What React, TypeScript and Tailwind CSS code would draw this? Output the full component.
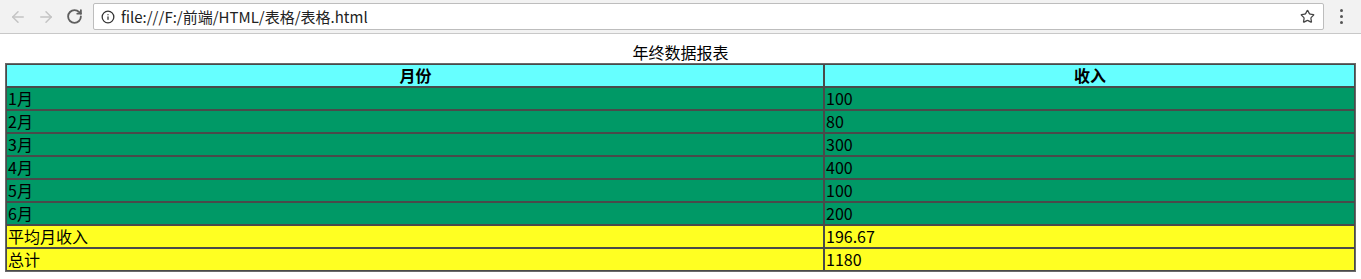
import { ArrowLeft, ArrowRight, RotateCw, Info, Star } from "lucide-react";

const rows = [
  { month: "1月", income: "100" },
  { month: "2月", income: "80" },
  { month: "3月", income: "300" },
  { month: "4月", income: "400" },
  { month: "5月", income: "100" },
  { month: "6月", income: "200" },
];

const font = { fontFamily: '"Noto Sans CJK SC", "Noto Sans", sans-serif' };

function BrowserBar() {
  return (
    <div className="h-[34px] bg-[#f2f2f2] border-b border-[#c8c8c8] flex items-center">
      <div className="flex items-center gap-[10px] pl-[9px] text-[#c4c4c4]">
        <ArrowLeft size={18} strokeWidth={2} />
        <ArrowRight size={18} strokeWidth={2} />
        <RotateCw size={17} strokeWidth={2.6} className="text-[#5f5f5f] ml-[1px]" />
      </div>
      <div className="ml-[10px] h-[27px] w-[1231px] bg-white border border-[#bdbdbd] rounded-[2px] flex items-center pl-[7px] pr-[8px]">
        <Info size={14} strokeWidth={2.2} className="text-[#333]" />
        <span className="ml-[6px] text-[15px] text-[#222] leading-none" style={font}>
          file:///F:/前端/HTML/表格/表格.html
        </span>
        <Star size={15} strokeWidth={2} className="ml-auto text-[#444]" />
      </div>
      <div className="ml-[16px] flex flex-col gap-[3px]">
        <span className="w-[3px] h-[3px] bg-[#555] rounded-full" />
        <span className="w-[3px] h-[3px] bg-[#555] rounded-full" />
        <span className="w-[3px] h-[3px] bg-[#555] rounded-full" />
      </div>
    </div>
  );
}

export default function App() {
  const border = "border border-[#4a4a4a] p-0 pl-[1px] leading-[21px]";
  const cell = border + " text-left";
  return (
    <div className="bg-white h-[279px] text-black text-[16px]" style={font}>
      <BrowserBar />
      <div className="pt-[8px] px-[5px]">
        <table className="w-[1351px] border-separate border-spacing-0 border border-[#6a6a6a]">
          <caption className="leading-[21px]">年终数据报表</caption>
          <thead>
            <tr className="bg-[#66ffff]">
              <th className={"w-[818px] font-bold text-center " + border}>月份</th>
              <th className={"font-bold text-center " + border}>收入</th>
            </tr>
          </thead>
          <tbody>
            {rows.map((r) => (
              <tr key={r.month} className="bg-[#009966]">
                <td className={cell}>{r.month}</td>
                <td className={cell}>{r.income}</td>
              </tr>
            ))}
            <tr className="bg-[#ffff22]">
              <td className={cell}>平均月收入</td>
              <td className={cell}>196.67</td>
            </tr>
            <tr className="bg-[#ffff22]">
              <td className={cell}>总计</td>
              <td className={cell}>1180</td>
            </tr>
          </tbody>
        </table>
      </div>
    </div>
  );
}
